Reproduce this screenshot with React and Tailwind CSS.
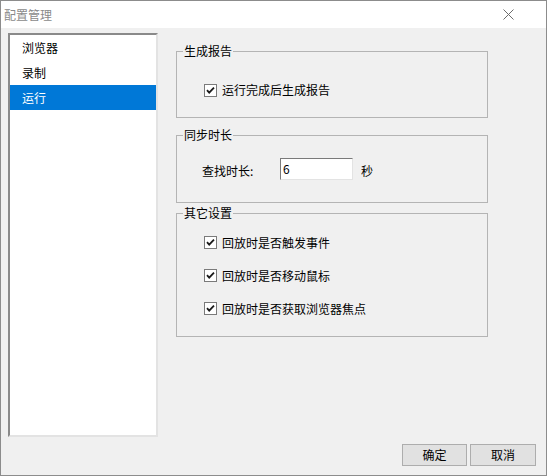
const FONT = "font-['Noto_Sans_CJK_SC','Microsoft_YaHei',sans-serif]";

function CheckBox() {
  return (
    <svg width="13" height="13" viewBox="0 0 13 13" className="shrink-0">
      <rect x="0.5" y="0.5" width="12" height="12" fill="#ffffff" stroke="#7a7a7a" />
      <path d="M3 6.2 L5.2 8.6 L10 3.6" fill="none" stroke="#1a1a1a" strokeWidth="1.8" />
    </svg>
  );
}

function CheckRow({ label, className = "" }) {
  return (
    <div className={"flex items-center pl-[27px] " + className}>
      <CheckBox />
      <span className="ml-[5px] leading-[16px]">{label}</span>
    </div>
  );
}

function Group({ title, className = "", children }) {
  return (
    <fieldset className={"border border-[#b4b4b4] " + className}>
      <legend className="ml-[6px] px-[1px] leading-[16px]">{title}</legend>
      {children}
    </fieldset>
  );
}

export default function App() {
  const items = ["浏览器", "录制", "运行"];
  const selected = 2;

  return (
    <div
      className={
        "w-[547px] h-[476px] border border-[#8c8c8c] bg-[#f0f0f0] flex flex-col text-[12px] text-black " +
        FONT
      }
    >
      {/* title bar */}
      <div className="h-[27px] bg-white flex items-center justify-between pl-[3px] pr-[32px]">
        <span className="text-[#8a8a8a] leading-[16px]">配置管理</span>
        <svg width="11" height="11" viewBox="0 0 11 11">
          <path d="M0.5 0.5 L10.5 10.5 M10.5 0.5 L0.5 10.5" stroke="#6b6b6b" strokeWidth="1" />
        </svg>
      </div>

      <div className="flex pt-[5px] pl-[7px]">
        {/* left list */}
        <div className="w-[150px] h-[404px] bg-white border-2 border-t-[#8a8a8a] border-l-[#8a8a8a] border-r-[#e3e3e3] border-b-[#e3e3e3] flex flex-col">
          {items.map((it, i) => (
            <div
              key={it}
              className={
                "h-[25px] flex items-center pl-[12px] " +
                (i === selected ? "bg-[#0078d7] text-white" : "")
              }
            >
              {it}
            </div>
          ))}
        </div>

        {/* right panel */}
        <div className="ml-[18px] w-[312px] flex flex-col pt-[10px]">
          <Group title="生成报告" className="pt-[23px] pb-[19px]">
            <CheckRow label="运行完成后生成报告" />
          </Group>

          <Group title="同步时长" className="mt-[9px] pt-[15px] pb-[22px]">
            <div className="flex items-center pl-[25px] h-[22px]">
              <span className="w-[78px] leading-[16px] mt-[4px]">查找时长:</span>
              <div className="w-[73px] h-[22px] bg-white border border-t-[#7a7a7a] border-l-[#7a7a7a] border-r-[#e3e3e3] border-b-[#e3e3e3] flex items-center pl-[2px]">
                6
              </div>
              <span className="ml-[8px] leading-[16px] mt-[4px]">秒</span>
            </div>
          </Group>

          <Group title="其它设置" className="mt-[2px] pt-[5px] pb-[11px]">
            <div className="flex flex-col">
              <CheckRow label="回放时是否触发事件" className="h-[33px]" />
              <CheckRow label="回放时是否移动鼠标" className="h-[33px]" />
              <CheckRow label="回放时是否获取浏览器焦点" className="h-[33px]" />
            </div>
          </Group>
        </div>
      </div>

      {/* buttons */}
      <div className="flex justify-end gap-[3px] pr-[10px] mt-[7px]">
        <button className="w-[65px] h-[22px] bg-[#e1e1e1] border border-[#adadad] leading-[16px]">
          确定
        </button>
        <button className="w-[66px] h-[22px] bg-[#e1e1e1] border border-[#adadad] leading-[16px]">
          取消
        </button>
      </div>
    </div>
  );
}
